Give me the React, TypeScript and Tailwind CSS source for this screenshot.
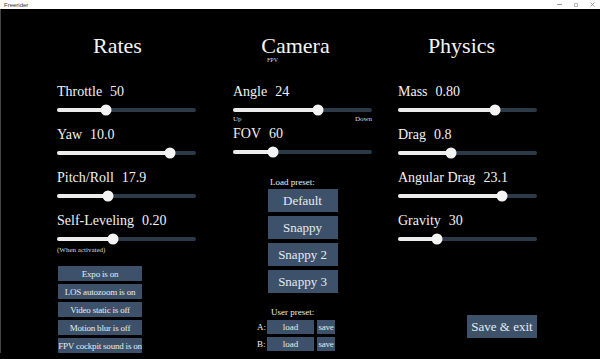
import React from "react";

function Slider({ label, value, frac, caption }: { label: string; value: string; frac: number; caption?: React.ReactNode }) {
  return (
    <div className="flex flex-col">
      <div className="flex h-[16px] items-center text-[14px] leading-[16px] text-[#f2f2f2]">
        <span>{label}</span>
        <span className="ml-[8px]">{value}</span>
      </div>
      <div className="relative mt-[8px] h-[4px] w-full rounded-full bg-[#2c3a48]">
        <div className="h-full rounded-full bg-[#ececec]" style={{ width: `${frac * 100}%` }} />
        <div
          className="absolute top-1/2 h-[11px] w-[11px] -translate-x-1/2 -translate-y-1/2 rounded-full bg-[#f4f4f4]"
          style={{ left: `${frac * 100}%` }}
        />
      </div>
      {caption}
    </div>
  );
}

function Btn({ children, className }: { children: React.ReactNode; className: string }) {
  return (
    <div className={`flex items-center justify-center whitespace-nowrap bg-[#3d526a] text-[#e4eaf0] ${className}`}>{children}</div>
  );
}

export default function App() {
  return (
    <div className="relative h-[359px] w-[600px] overflow-hidden bg-black font-['Liberation_Serif','DejaVu_Serif',serif]">
      {/* title bar */}
      <div className="flex h-[9px] items-center bg-white pl-[4px] pr-[5px]">
        <span className="font-['Liberation_Sans',sans-serif] text-[6px] leading-[6px] text-[#333]">Freerider</span>
        <div className="ml-auto flex items-center gap-[12px]">
          <div className="h-px w-[5px] bg-[#999]" />
          <div className="h-[4px] w-[4px] border border-[#bbb]" />
          <svg width="5" height="5" viewBox="0 0 5 5">
            <path d="M0.5 0.5 L4.5 4.5 M4.5 0.5 L0.5 4.5" stroke="#888" strokeWidth="0.8" />
          </svg>
        </div>
      </div>

      <div className="flex border-l border-[#444] pt-[26px]">
        {/* Rates */}
        <div className="ml-[56px] flex w-[139px] flex-col">
          <div className="h-[49px]">
            <div className="pr-[18px] text-center text-[22px] leading-[22px] text-[#f4f4f4]">Rates</div>
          </div>
          <div className="h-[43px]"><Slider label="Throttle" value="50" frac={0.35} /></div>
          <div className="h-[43px]"><Slider label="Yaw" value="10.0" frac={0.81} /></div>
          <div className="h-[43px]"><Slider label="Pitch/Roll" value="17.9" frac={0.37} /></div>
          <div className="h-[43px]">
            <Slider
              label="Self-Leveling"
              value="0.20"
              frac={0.4}
              caption={<div className="mt-[5px] text-[7px] leading-[8px] text-[#ddd]">(When activated)</div>}
            />
          </div>
          <div className="ml-[1px] mt-[10px] flex w-[84px] flex-col gap-[3px] text-[9px] leading-[10px] tracking-[-0.2px]">
            <Btn className="h-[15px]">Expo is on</Btn>
            <Btn className="h-[15px]">LOS autozoom is on</Btn>
            <Btn className="h-[15px]">Video static is off</Btn>
            <Btn className="h-[15px]">Motion blur is off</Btn>
            <Btn className="h-[15px]">FPV cockpit sound is on</Btn>
          </div>
        </div>

        {/* Camera */}
        <div className="ml-[37px] flex w-[139px] flex-col">
          <div className="h-[49px]">
            <div className="pr-[14px] text-center text-[22px] leading-[22px] text-[#f4f4f4]">Camera</div>
            <div className="ml-[34px] text-[6px] leading-[7px] text-[#ddd]">FPV</div>
          </div>
          <div className="h-[42px]">
            <Slider
              label="Angle"
              value="24"
              frac={0.61}
              caption={
                <div className="mt-[3px] flex justify-between text-[7px] leading-[8px] text-[#ddd]">
                  <span>Up</span>
                  <span>Down</span>
                </div>
              }
            />
          </div>
          <div className="h-[42px]"><Slider label="FOV" value="60" frac={0.29} /></div>
          <div className="ml-[37px] mt-[9px] text-[9px] leading-[10px] text-[#eee]">Load preset:</div>
          <div className="mt-[2px] flex flex-col items-center gap-[4px] text-[13px] leading-[14px]">
            <Btn className="h-[23px] w-[70px]">Default</Btn>
            <Btn className="h-[23px] w-[70px]">Snappy</Btn>
            <Btn className="h-[23px] w-[70px]">Snappy 2</Btn>
            <Btn className="h-[23px] w-[70px]">Snappy 3</Btn>
          </div>
          <div className="ml-[38px] mt-[14px] text-[9px] leading-[10px] text-[#eee]">User preset:</div>
          <div className="mt-[3px] flex flex-col gap-[3px] text-[9px] leading-[10px]">
            {["A:", "B:"].map((k) => (
              <div key={k} className="flex h-[14px] items-center">
                <span className="ml-[24px] w-[10px] text-[#eee]">{k}</span>
                <Btn className="h-[14px] w-[47px]">load</Btn>
                <Btn className="ml-[3px] h-[14px] w-[18px] tracking-[-0.3px]">save</Btn>
              </div>
            ))}
          </div>
        </div>

        {/* Physics */}
        <div className="ml-[26px] flex w-[139px] flex-col">
          <div className="h-[49px]">
            <div className="pr-[12px] text-center text-[22px] leading-[22px] text-[#f4f4f4]">Physics</div>
          </div>
          <div className="h-[43px]"><Slider label="Mass" value="0.80" frac={0.7} /></div>
          <div className="h-[43px]"><Slider label="Drag" value="0.8" frac={0.38} /></div>
          <div className="h-[43px]"><Slider label="Angular Drag" value="23.1" frac={0.75} /></div>
          <div className="h-[43px]"><Slider label="Gravity" value="30" frac={0.28} /></div>
          <div className="mt-[59px] flex justify-end text-[13px] leading-[14px]">
            <Btn className="h-[23px] w-[70px]">Save &amp; exit</Btn>
          </div>
        </div>
      </div>
    </div>
  );
}
